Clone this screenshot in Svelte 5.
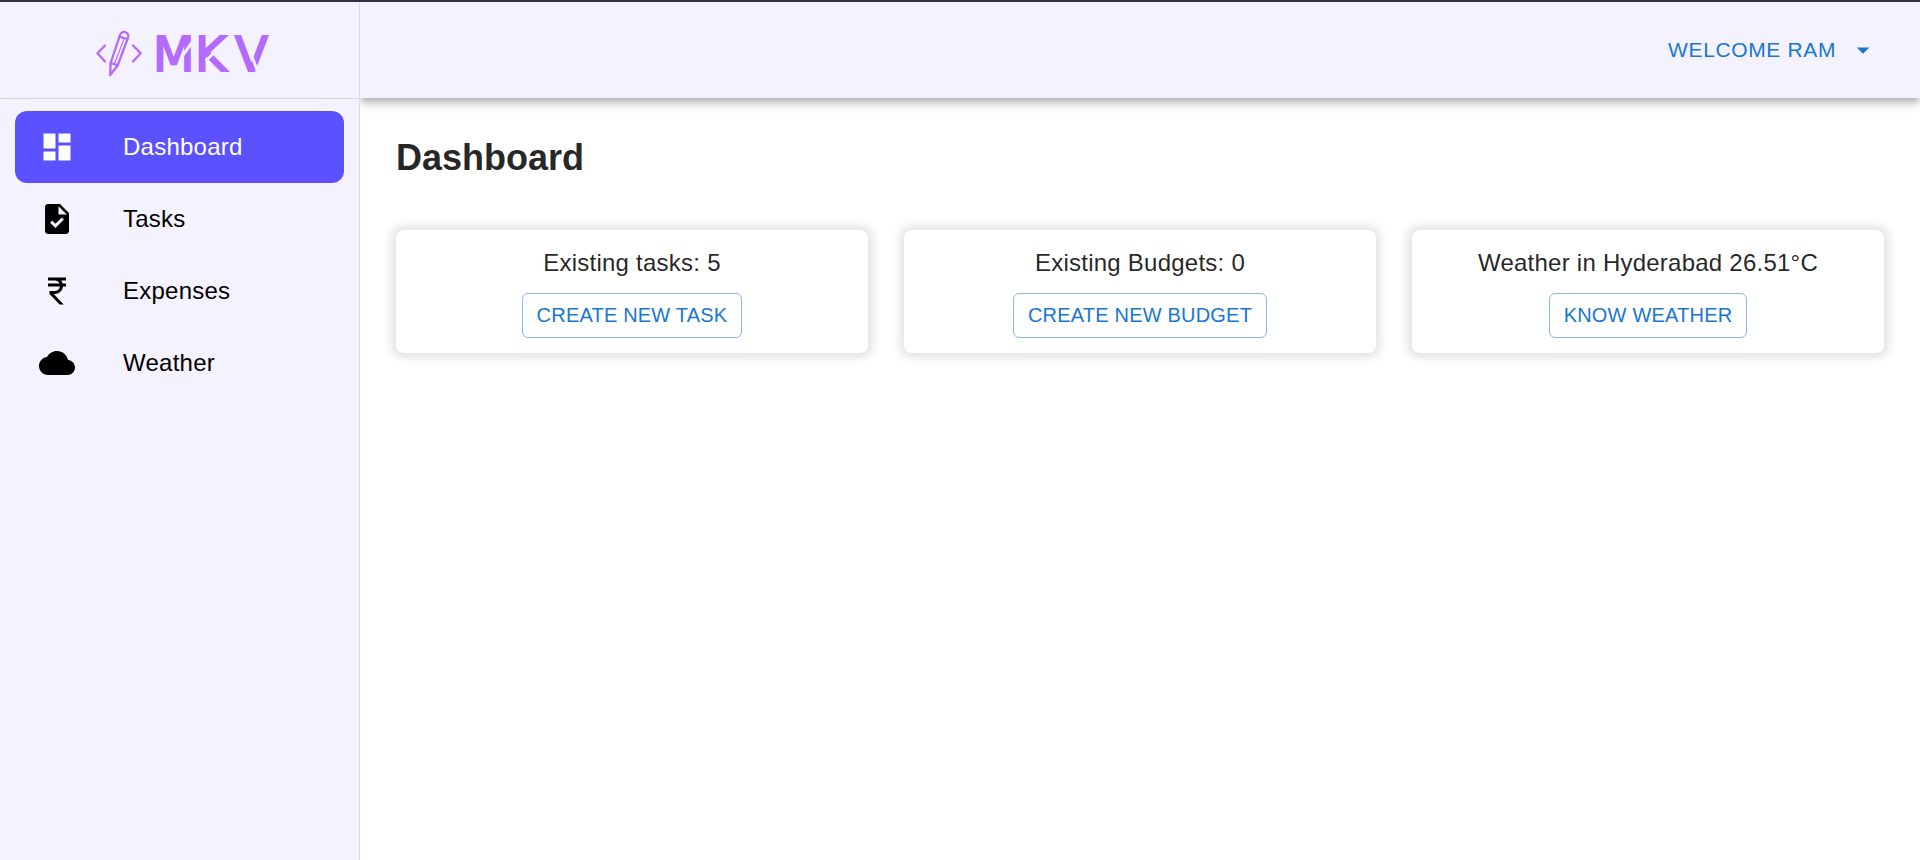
<script>
  const navItems = [
    {
      label: 'Dashboard',
      icon: 'M3 13h8V3H3v10zm0 8h8v-6H3v6zm10 0h8V11h-8v10zm0-18v6h8V3h-8z'
    },
    {
      label: 'Tasks',
      icon: 'M14 2H6c-1.1 0-1.99.9-1.99 2L4 20c0 1.1.89 2 1.99 2H18c1.1 0 2-.9 2-2V8l-6-6zm-3.06 16L7.4 14.46l1.41-1.41 2.12 2.12 4.24-4.24 1.41 1.41L10.94 18zM13 9V3.5L18.5 9H13z'
    },
    {
      label: 'Expenses',
      icon: 'M13.66 7c-.56-1.18-1.76-2-3.16-2H6V3h12v2h-3.26c.48.58.84 1.26 1.05 2H18v2h-2.02c-.25 2.8-2.61 5-5.48 5h-.73l6.73 7h-2.77L7 14v-2h3.5c1.76 0 3.22-1.3 3.46-3H6V7h7.66z'
    },
    {
      label: 'Weather',
      icon: 'M19.35 10.04C18.67 6.59 15.64 4 12 4 9.11 4 6.6 5.64 5.35 8.04 2.34 8.36 0 10.91 0 14c0 3.31 2.69 6 6 6h13c2.76 0 5-2.24 5-5 0-2.64-2.05-4.78-4.65-4.96z'
    }
  ];

  const cards = [
    { title: 'Existing tasks: 5', action: 'CREATE NEW TASK' },
    { title: 'Existing Budgets: 0', action: 'CREATE NEW BUDGET' },
    { title: 'Weather in Hyderabad 26.51°C', action: 'KNOW WEATHER' }
  ];

  let active = $state('Dashboard');
</script>

<div class="shell">
  <aside class="sidebar">
    <div class="brand">
      <svg class="logo" viewBox="90 16 179 72" role="img" aria-label="MKV">
        <g class="mark">
          <path d="M105 45.5 97.5 53.3 105 61.5" />
          <path d="M133 45.5 140.7 53.3 133 61.5" />
          <path d="M110.6 63.2 120.4 34.2Q122 31 125.4 32.2 129 33.6 128.2 37.2L117.6 65.6 110.2 75Z" />
          <path d="M119.4 36.6 127.4 39M110.8 63 117.4 65.2" />
          <path class="fine" d="M123.8 39.4 114.4 64" />
        </g>
        <text class="wordmark" y="71"><tspan x="153">M</tspan><tspan x="195">K</tspan><tspan x="235">V</tspan></text>
        <g class="cuts">
          <path d="M194.5 39 183 55" />
          <path d="M205.6 61 215.6 51" />
          <path d="M251.4 55 259 75" />
        </g>
      </svg>
    </div>
    <nav class="nav" aria-label="Main">
      {#each navItems as item}
        <a
          href="#{item.label.toLowerCase()}"
          class="nav-item"
          class:active={active === item.label}
          aria-current={active === item.label ? 'page' : undefined}
          onclick={() => (active = item.label)}
        >
          <svg class="nav-icon" viewBox="0 0 24 24" aria-hidden="true"><path d={item.icon} /></svg>
          <span>{item.label}</span>
        </a>
      {/each}
    </nav>
  </aside>

  <div class="content">
    <header class="topbar">
      <button class="account" type="button" aria-haspopup="menu">
        <span>WELCOME RAM</span>
        <svg viewBox="0 0 24 24" aria-hidden="true"><path d="m7 10 5 5 5-5z" /></svg>
      </button>
    </header>
    <main>
      <h1>Dashboard</h1>
      <div class="cards">
        {#each cards as card}
          <section class="card">
            <p>{card.title}</p>
            <button class="action" type="button">{card.action}</button>
          </section>
        {/each}
      </div>
    </main>
  </div>
</div>

<style>
  :global(body) {
    margin: 0;
    background: #fff;
  }

  .shell {
    box-sizing: border-box;
    display: flex;
    min-height: 100vh;
    border-top: 2px solid #323043;
    font-family: 'Liberation Sans', Arial, sans-serif;
    font-size: 24px;
    line-height: 36px;
    color: rgba(0, 0, 0, 0.87);
  }

  .sidebar {
    box-sizing: border-box;
    flex: 0 0 360px;
    border-right: 1px solid #dddbe6;
    background: #f4f2ff;
  }

  .brand {
    box-sizing: border-box;
    display: flex;
    align-items: center;
    justify-content: center;
    height: 97px;
    padding-top: 4px;
    border-bottom: 1px solid #d6d4e0;
  }

  .logo {
    width: 179px;
    height: 72px;
    overflow: visible;
  }

  .mark {
    fill: none;
    stroke: #b469ff;
    stroke-width: 2.3;
    stroke-linecap: round;
    stroke-linejoin: round;
  }

  .fine {
    stroke-width: 1.2;
  }

  .wordmark {
    font-family: 'DejaVu Sans', sans-serif;
    font-size: 48px;
    fill: #b469ff;
    stroke: #b469ff;
    stroke-width: 2;
  }

  .cuts {
    fill: none;
    stroke: #f4f2ff;
    stroke-width: 3;
  }

  .nav {
    padding: 12px 15px;
  }

  .nav-item {
    display: flex;
    align-items: center;
    gap: 48px;
    height: 72px;
    padding: 0 24px;
    border-radius: 12px;
    color: #000;
    letter-spacing: 0.01em;
    text-decoration: none;
  }

  .nav-item.active {
    background: #5b51ff;
    color: #fff;
  }

  .nav-icon {
    width: 36px;
    height: 36px;
    fill: currentColor;
  }

  .content {
    flex: 1;
    min-width: 0;
    overflow: hidden;
  }

  .topbar {
    box-sizing: border-box;
    display: flex;
    justify-content: flex-end;
    align-items: flex-start;
    height: 96px;
    padding: 20px 42px;
    background: #f4f2ff;
    box-shadow:
      0 3px 6px -2px rgba(0, 0, 0, 0.2),
      0 6px 8px rgba(0, 0, 0, 0.14),
      0 2px 15px rgba(0, 0, 0, 0.12);
  }

  button {
    border: 0;
    background: none;
    font-family: inherit;
    font-size: 20px;
    color: #1976d2;
    cursor: pointer;
  }

  .account {
    display: flex;
    align-items: center;
    gap: 12px;
    padding: 0;
    font-size: 21px;
    line-height: 56px;
    letter-spacing: 0.03em;
  }

  .account svg {
    width: 30px;
    height: 30px;
    fill: currentColor;
  }

  main {
    padding: 36px;
  }

  h1 {
    margin: 0 0 48px;
    font-size: 36px;
    line-height: 48px;
  }

  .cards {
    display: grid;
    grid-template-columns: repeat(3, minmax(0, 1fr));
    gap: 36px;
  }

  .card {
    display: flex;
    flex-direction: column;
    align-items: center;
    gap: 12px;
    padding: 15px;
    border-radius: 8px;
    background: #fff;
    box-shadow: 0 0 8px 5px #e5e5e5;
  }

  .card p {
    margin: 0;
    letter-spacing: 0.01em;
  }

  .action {
    padding: 4px 14px;
    border: 1px solid #8cbae8;
    border-radius: 6px;
    line-height: 35px;
    letter-spacing: 0.01em;
  }
</style>
